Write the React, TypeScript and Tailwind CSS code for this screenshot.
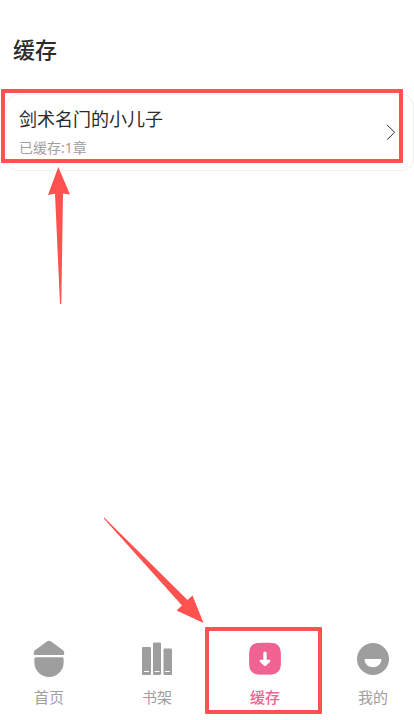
import type { ReactNode } from 'react'
import clsx from 'clsx'

const books = [{ id: 1, title: '剑术名门的小儿子', chapters: 1 }]

function HomeIcon() {
  return (
    <svg viewBox="0 0 36 40" className="h-10 w-9" fill="currentColor" aria-hidden="true">
      <path d="M16.200 2.300a3 3 0 0 1 3.600 0L32 11.300c.8.6 1.200 1.300 1.200 2.200v1.200c0 .8-.5 1.300-1.300 1.300H4.100c-.8 0-1.300-.5-1.300-1.300v-1.200c0-.9.4-1.600 1.200-2.200z" />
      <path d="M5 18.300h26c1 0 1.600.6 1.600 1.600v3.600C32.600 31.500 26.200 38 18 38S3.400 31.500 3.400 23.500v-3.600c0-1 .6-1.600 1.600-1.600z" />
    </svg>
  )
}

function ShelfIcon() {
  return (
    <svg viewBox="0 0 36 40" className="h-10 w-9" fill="currentColor" aria-hidden="true">
      <rect x="3" y="8" width="9" height="28" rx="1.2" />
      <rect x="14" y="3.500" width="8" height="32.500" rx="1.2" />
      <rect x="24.500" y="9.500" width="8.500" height="26.500" rx="1.2" />
      <path d="M5 32.500h5M15.500 32.500h5M26 32.500h5" stroke="#fff" strokeWidth="1" />
    </svg>
  )
}

function CacheIcon() {
  return (
    <svg viewBox="0 0 36 40" className="h-10 w-9" fill="currentColor" aria-hidden="true">
      <path d="M18 3.800c11.600 0 15.700 1.500 15.700 15.900S29.600 35.600 18 35.600 2.300 34.100 2.300 19.700 6.400 3.800 18 3.800z" />
      <rect x="2.300" y="4.100" width="31.400" height="31.200" rx="8.500" />
      <path
        d="M16.300 14.300a1.700 1.700 0 0 1 3.400 0v6.500h2.500c1.200 0 1.600 1.300.7 2.100l-3.700 3.600c-.7.700-1.700.7-2.400 0l-3.700-3.600c-.9-.8-.5-2.100.7-2.100h2.500z"
        fill="#fff"
      />
    </svg>
  )
}

function MineIcon() {
  return (
    <svg viewBox="0 0 36 40" className="h-10 w-9" fill="currentColor" aria-hidden="true">
      <circle cx="18" cy="20" r="16" />
      <path d="M10.500 20h15c.6 0 1 .4.9 1-.5 4.200-3.900 7.200-8.400 7.200S10.100 25.200 9.600 21c-.1-.6.3-1 .9-1z" fill="#fff" />
    </svg>
  )
}

type TabProps = {
  label: string
  icon: ReactNode
  active?: boolean
  children?: ReactNode
}

function Tab({ label, icon, active, children }: TabProps) {
  return (
    <div className="relative w-[58px]">
      <button
        type="button"
        aria-current={active ? 'page' : undefined}
        className={clsx(
          'flex w-full flex-col items-center gap-2 text-[15px] leading-5',
          active ? 'font-medium text-[#f06292]' : 'text-[#9e9e9e]'
        )}
      >
        {icon}
        <span>{label}</span>
      </button>
      {children}
    </div>
  )
}

export default function App() {
  return (
    <div className="flex min-h-screen flex-col overflow-hidden bg-white font-['Noto_Sans_CJK_SC',sans-serif]">
      <header className="px-[13px] pt-8 pb-[30px]">
        <h1 className="text-[22px] leading-8 font-medium text-[#2b2b2b]">缓存</h1>
      </header>

      <main className="flex-1 pl-1.5">
        {books.map((book) => (
          <div key={book.id} className="relative">
            <button
              type="button"
              className="flex w-full items-center justify-between rounded-xl border border-[#efefef] pt-[11px] pr-[17px] pb-3 pl-3 text-left"
            >
              <span className="flex flex-col gap-2">
                <span className="text-lg leading-6 text-[#2b2b2b]">{book.title}</span>
                <span className="font-['Noto_Sans','Noto_Sans_CJK_SC',sans-serif] text-sm leading-5 text-[#9e9e9e]">
                  已缓存:{book.chapters}章
                </span>
              </span>
              <svg viewBox="0 0 10 16" className="h-4 w-2.5" fill="none" stroke="#2b2b2b" aria-hidden="true">
                <path d="M1 .8 8.500 8.300 1 15.800" />
              </svg>
            </button>

            {/* highlight frame and its pointer */}
            <div className="pointer-events-none absolute -top-[5px] right-[11px] -left-[5px] h-[74px] rounded-[1px] border-4 border-[#fd5250]" />
            <svg
              viewBox="0 0 24 138"
              className="pointer-events-none absolute top-[73px] left-[41px] h-[138px] w-6"
              fill="#fd5250"
              aria-hidden="true"
            >
              <path d="M11.300 0 23 27.500 16 26.500 14.300 137h-1.300L8 26.700 1 28z" />
            </svg>
          </div>
        ))}
      </main>

      <nav className="flex justify-between pr-3 pb-[13px] pl-5">
        <Tab label="首页" icon={<HomeIcon />} />
        <Tab label="书架" icon={<ShelfIcon />} />
        <Tab label="缓存" icon={<CacheIcon />} active>
          <div className="pointer-events-none absolute -top-3 -left-[31px] h-[87px] w-[117px] rounded-[1px] border-4 border-[#fd5250]" />
          <svg
            viewBox="0 0 101 107"
            className="pointer-events-none absolute -top-[122px] -left-[133px] h-[107px] w-[101px]"
            fill="#fd5250"
            aria-hidden="true"
          >
            <path d="M1.500.8 84.500 83 89.500 78.500 100.500 106 73.500 93.500 79 88.500.8 1.500z" />
          </svg>
        </Tab>
        <Tab label="我的" icon={<MineIcon />} />
      </nav>
    </div>
  )
}
